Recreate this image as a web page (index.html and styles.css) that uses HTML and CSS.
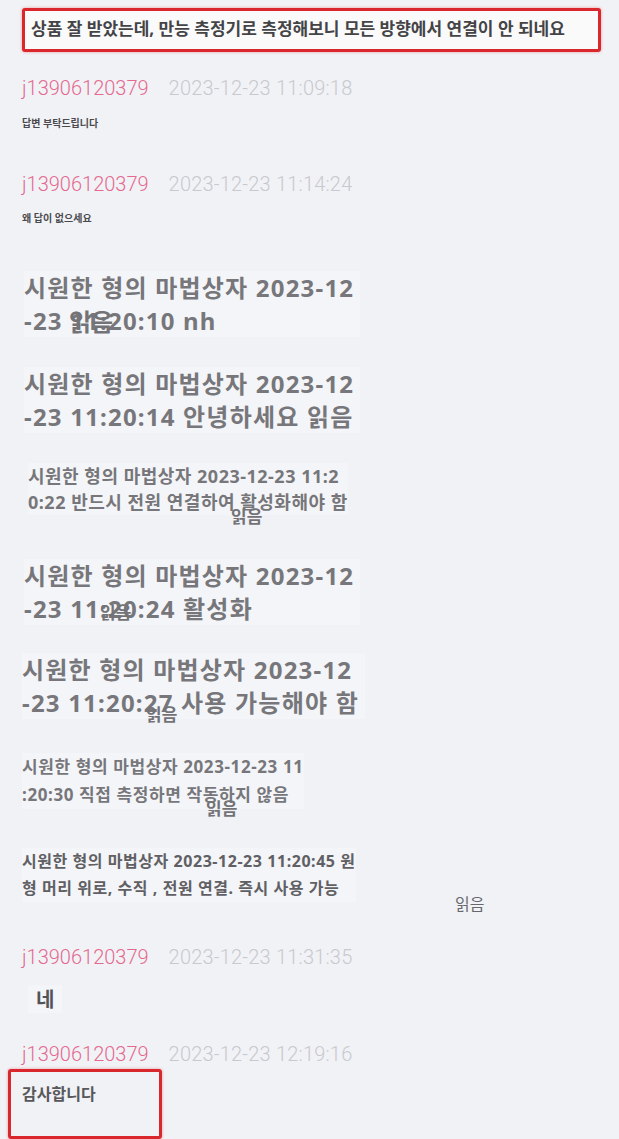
FILE: index.html
```html
<!DOCTYPE html>
<html lang="ko">
<head>
<meta charset="utf-8">
<link rel="stylesheet" href="styles.css">
</head>
<body>
<div class="chat">
  <div class="hl-top">상품 잘 받았는데, 만능 측정기로 측정해보니 모든 방향에서 연결이 안 되네요</div>

  <div class="meta m1"><span class="user">j13906120379</span><span class="date">2023-12-23 11:09:18</span></div>
  <div class="small s1">답변 부탁드립니다</div>

  <div class="meta m2"><span class="user">j13906120379</span><span class="date">2023-12-23 11:14:24</span></div>
  <div class="small s2">왜 답이 없으세요</div>

  <div class="bubble big b1">시원한 형의 마법상자 2023-12<br>-23 11:20:10 nh<span class="read r1">읽음</span></div>
  <div class="bubble big b2">시원한 형의 마법상자 2023-12<br>-23 11:20:14 안녕하세요 읽음</div>
  <div class="bubble mid b3">시원한 형의 마법상자 2023-12-23 11:2<br>0:22 반드시 전원 연결하여 활성화해야 함<span class="read r3">읽음</span></div>
  <div class="bubble big b4">시원한 형의 마법상자 2023-12<br>-23 11:20:24 활성화<span class="read r4">읽음</span></div>
  <div class="bubble big b5">시원한 형의 마법상자 2023-12<br>-23 11:20:27 사용 가능해야 함<span class="read r5">읽음</span></div>
  <div class="bubble mid b6">시원한 형의 마법상자 2023-12-23 11<br>:20:30 직접 측정하면 작동하지 않음<span class="read r6">읽음</span></div>
  <div class="bubble sm b7">시원한 형의 마법상자 2023-12-23 11:20:45 원<br>형 머리 위로, 수직 , 전원 연결. 즉시 사용 가능<span class="read r7">읽음</span></div>

  <div class="meta m3"><span class="user">j13906120379</span><span class="date">2023-12-23 11:31:35</span></div>
  <div class="bubble yes">네</div>

  <div class="meta m4"><span class="user">j13906120379</span><span class="date">2023-12-23 12:19:16</span></div>
  <div class="hl-bottom">감사합니다</div>
</div>
</body>
</html>
```

FILE: styles.css
```css
html, body {
  margin: 0;
  padding: 0;
  background: #f1f2f6;
}
body {
  width: 619px;
  height: 1139px;
  overflow: hidden;
  font-family: "Noto Sans", "Noto Sans CJK KR", sans-serif;
}
.chat {
  display: flex;
  flex-direction: column;
  align-items: flex-start;
  padding-left: 22px;
}
.hl-top {
  box-sizing: border-box;
  margin-top: 8px;
  width: 579px;
  height: 44px;
  border: 3px solid #d9272d;
  border-radius: 3px;
  background: #fafafb;
  box-shadow: 0 0 3px rgba(217, 39, 45, 0.45);
  padding-left: 6px;
  font-size: 17px;
  font-weight: 700;
  line-height: 36px;
  letter-spacing: 0;
  color: #444447;
  white-space: nowrap;
}
.meta {
  height: 24px;
  line-height: 24px;
  font-family: Roboto, "Noto Sans", sans-serif;
  font-weight: 300;
  font-size: 20px;
  white-space: nowrap;
}
.user {
  color: #e4698f;
}
.date {
  color: #c8c9ce;
  margin-left: 20px;
  letter-spacing: 0.2px;
}
.m1 { margin-top: 24px; }
.m2 { margin-top: 42px; }
.m3 { margin-top: 43px; }
.m4 { margin-top: 29px; }
.small {
  font-size: 10px;
  line-height: 14px;
  color: #4a4a4e;
  font-weight: 700;
}
.s1 { margin-top: 16px; }
.s2 { margin-top: 15px; }

.bubble {
  position: relative;
  background: #f4f5f8;
  color: #77777b;
  font-weight: 700;
  white-space: nowrap;
}
.big {
  font-size: 24px;
  line-height: 33px;
  letter-spacing: 1.2px;
  padding-right: 6px;
}
.mid {
  font-size: 18px;
  line-height: 26px;
  letter-spacing: 0.5px;
}
.sm {
  font-size: 16px;
  line-height: 27px;
  letter-spacing: 0.55px;
  color: #606064;
}
.b1 { margin-top: 46px; margin-left: 2px; }
.b2 { margin-top: 30px; margin-left: 2px; }
.b3 { margin-top: 30px; margin-left: 6px; }
.b4 { margin-top: 44px; margin-left: 2px; }
.b5 { margin-top: 28px; }
.b6 { margin-top: 34px; line-height: 28px; font-size: 17px; letter-spacing: 0.6px; }
.b7 { margin-top: 39px; }
.read {
  position: absolute;
  font-family: "Noto Sans CJK KR", sans-serif;
  font-weight: 700;
  color: #737377;
  white-space: nowrap;
  letter-spacing: 0;
}
.r1 { left: 45px; top: 33px; font-size: 24px; line-height: 33px; }
.r3 { left: 203px; top: 40px; font-size: 17px; line-height: 26px; }
.r4 { left: 76px; top: 40px; font-size: 17px; line-height: 26px; }
.r5 { left: 124px; top: 48px; font-size: 17px; line-height: 26px; }
.r6 { left: 184px; top: 42px; font-size: 17px; line-height: 26px; }
.r7 { left: 433px; top: 43px; font-size: 16px; line-height: 24px; font-weight: 400; color: #68686c; }

.yes {
  margin-top: 16px;
  margin-left: 6px;
  padding: 0 8px;
  font-family: "Noto Sans CJK KR", sans-serif;
  font-size: 20px;
  line-height: 28px;
  color: #545458;
}
.hl-bottom {
  box-sizing: border-box;
  margin-top: 3px;
  margin-left: -14px;
  width: 154px;
  height: 70px;
  border: 3px solid #d9272d;
  border-radius: 3px;
  box-shadow: 0 0 3px rgba(217, 39, 45, 0.45);
  padding: 10px 0 0 11px;
  font-family: "Noto Sans CJK KR", sans-serif;
  font-size: 16px;
  font-weight: 700;
  line-height: 22px;
  color: #58585c;
}
```
